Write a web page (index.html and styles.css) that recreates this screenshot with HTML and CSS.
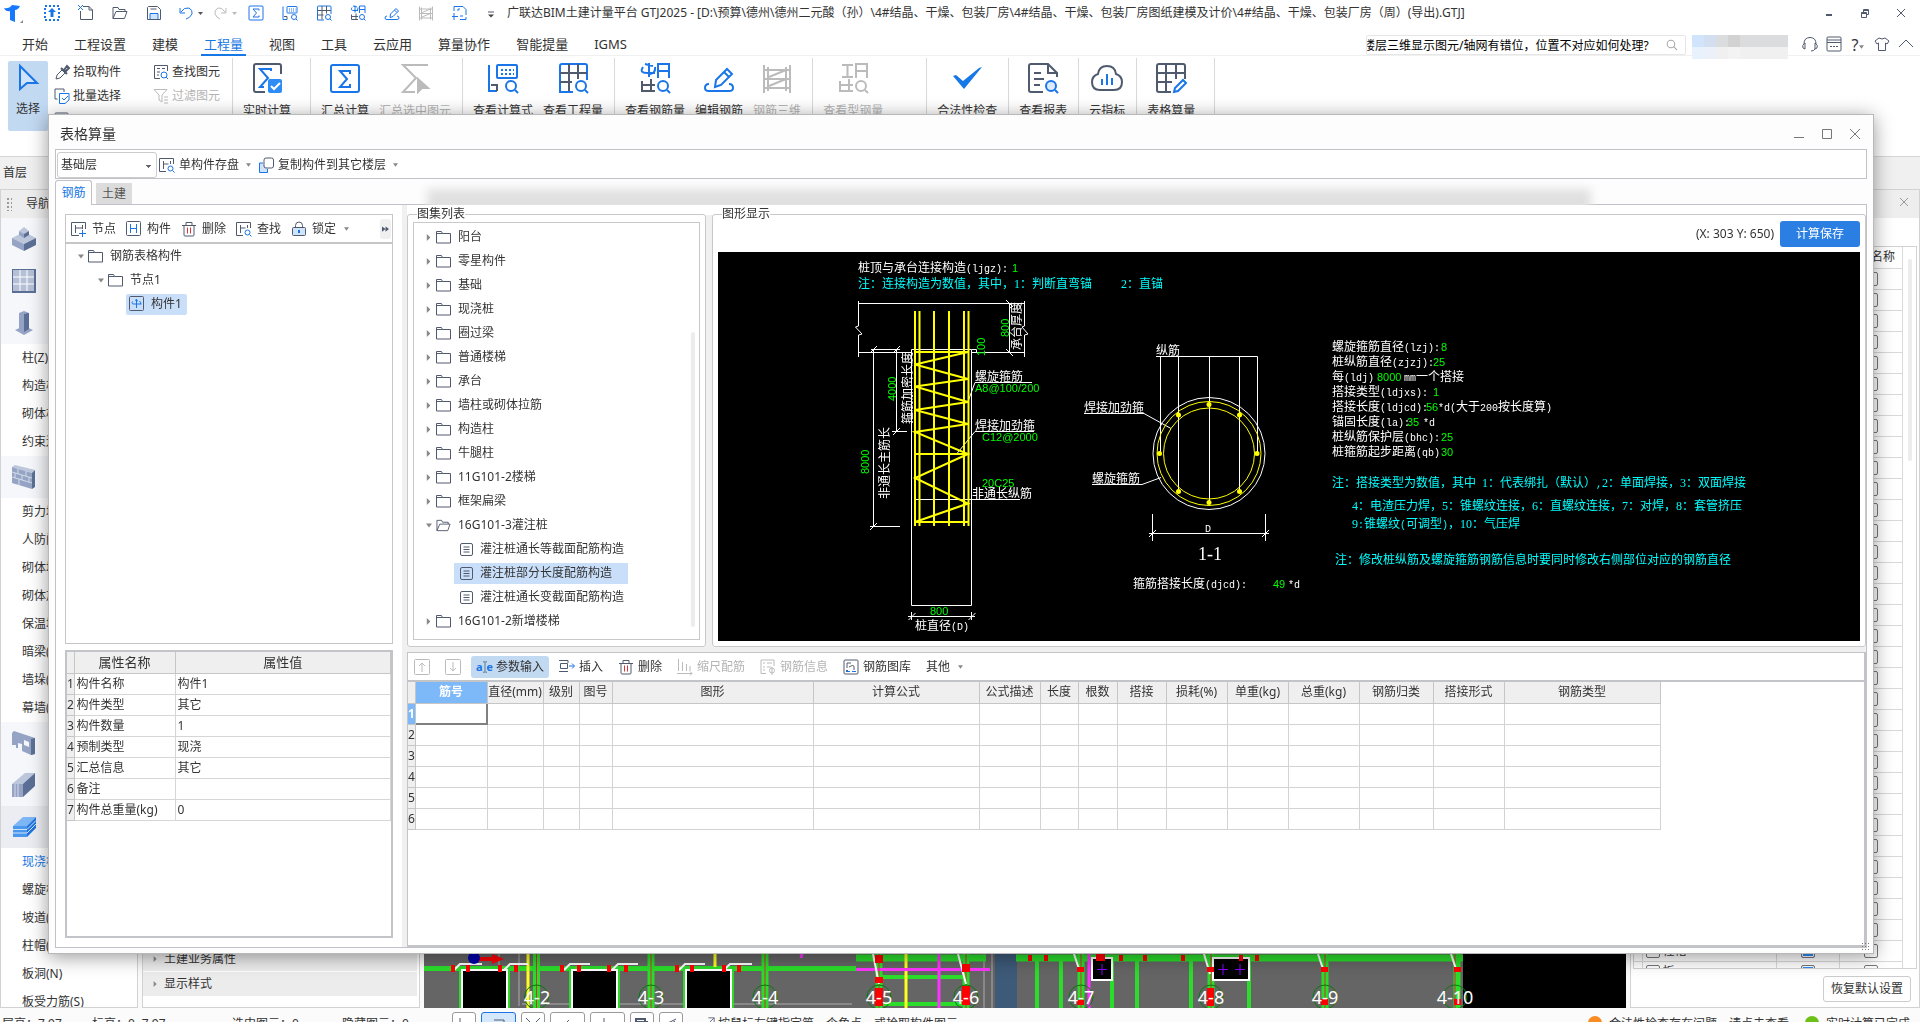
FILE: index.html
```html
<!DOCTYPE html>
<html lang="zh-CN">
<head>
    <meta charset="UTF-8">
    <meta name="viewport" content="width=device-width, initial-scale=1.0">
    <title>广联达BIM土建计量平台 GTJ2025</title>
    <link rel="stylesheet" href="styles.css">
</head>
<body>
    <!-- Icon set -->
    <svg class="defs" aria-hidden="true">
        <symbol id="i-folder" viewBox="0 0 15 13"><path d="M.5 12V.5h5l1 2h8V12zM.5 2.500h6" /></symbol>
        <symbol id="i-folder-open" viewBox="0 0 16 13"><path d="M1 12V1h5l1 2h6v2M1 12 4 5h11l-2.500 7z" /></symbol>
        <symbol id="i-doc" viewBox="0 0 13 13"><rect x=".5" y=".5" width="12" height="12" rx="1.500" /><path d="M3.500 4h6M3.500 6.500h6M3.500 9h6" /></symbol>
        <symbol id="i-right" viewBox="0 0 5 8"><path d="M0 0v8l4-4z" class="solid" /></symbol>
        <symbol id="i-down" viewBox="0 0 6 4"><path d="M0 0h6L3 4z" class="solid" /></symbol>
        <symbol id="i-sum" viewBox="0 0 16 16"><rect x="1" y="1" width="14" height="14" rx="1" /><path d="M11 5.500V4H5l3.500 4L5 12h6v-1.500" /></symbol>
        <symbol id="i-node" viewBox="0 0 16 16"><path d="M8 14.500H.5v-13h14V8M4.500 4v8M11.500 4v4M4.500 7h7" /><path class="blue" d="M11.500 9v7M8 12.500h7" /></symbol>
        <symbol id="i-part" viewBox="0 0 16 16"><rect x=".5" y=".5" width="14" height="14" rx="1" /><path class="blue" d="M4.500 3v9M10.500 3v9M4.500 7.500h6" /></symbol>
        <symbol id="i-trash" viewBox="0 0 16 16"><path d="M1 4.500h14M5 4V1.500h6V4M3 4.500V14q0 1 1 1h8q1 0 1-1V4.500" /><path class="red" d="M6.500 6.500v6M9.500 6.500v6" /></symbol>
        <symbol id="i-find" viewBox="0 0 16 16"><path d="M7 14.500H.5v-13h14V7M4.500 4v8M11.500 4v3M4.500 7h5" /><circle class="blue" cx="11.500" cy="11.500" r="2.500" /><path class="blue" d="m13.500 13.500 2 2" /></symbol>
        <symbol id="i-lock" viewBox="0 0 16 16"><rect x="1.500" y="6.500" width="13" height="8" rx="1" fill="#cfe3fb" /><path d="M4.500 6V4.500q0-3.500 3.500-3.500t3.500 3.500V6" /><path class="blue" d="M8 9v3M7 10h2" stroke-width="2" /></symbol>
        <symbol id="i-copy" viewBox="0 0 16 16"><path class="blue" d="M5 6H1.500v9.500h8V12" fill="#cfe3fb" /><rect x="6" y="1" width="9.500" height="10" rx="2" fill="#fff" /></symbol>
        <symbol id="i-save" viewBox="0 0 16 16"><path d="M2.500 1.500h9l3 3v10h-13v-12z" /><path class="blue" d="M4 14V8.500h8V14" fill="#cfe3fb" /><path d="M4.500 4h6" /></symbol>
        <symbol id="i-view" viewBox="0 0 32 32"><path class="blue" d="M2 3v26h8" /><path d="M4 23h6v6" /><rect class="blue" x="10" y="3" width="20" height="13" rx="1" /><path class="blue" d="M14 8h13M14 12h13" stroke-dasharray="2 2" /><circle class="blue" cx="24" cy="24" r="5" /><path class="blue" d="m28 28 3 3" /></symbol>
        <symbol id="i-grid" viewBox="0 0 32 32"><path class="blue" d="M16 30H3V4q0-2 2-2h23q2 0 2 2v14" /><path d="M3 11h27M3 20h12M12 2v27M21 2v15" /><circle class="blue" cx="24" cy="24" r="5" /><path class="blue" d="m28 28 3 3" /></symbol>
        <symbol id="i-rebar" viewBox="0 0 32 32"><path class="blue" d="M10 1v14M4 5q-4 6 4 6h8M16 5q1 6-5 7M6 2l8 2" /><path d="M3 19v10h13M3 23h13M12 17v12" /><path class="blue" d="M19 16V2h11v14M19 9h11" /><circle class="blue" cx="24" cy="24" r="5" /><path class="blue" d="m28 28 3 3" /></symbol>
        <symbol id="i-edit" viewBox="0 0 32 32"><path class="blue" d="M6 22q-4 0-4 4 0 3 4 3h20q4 0 4-3 0-4-4-4M12 25l1-7L24 7l5 5-11 11zM21 10l5 5" /></symbol>
        <symbol id="i-frame" viewBox="0 0 32 32"><path d="M3 3v28M7 5v24M25 5v24M29 3v28M3 8h26M3 17h26M3 26h26M8 24l17-7M8 15l17-7" /></symbol>
        <symbol id="i-steel" viewBox="0 0 32 32"><path d="M5 3h11M10.500 3v12M5 15h11M3 19v10h13M3 23h13M12 17v12M19 16V2h11v14M19 9h11" /><circle cx="24" cy="24" r="5" /><path d="m28 28 3 3" /></symbol>
    </svg>

    <div class="app">
        <!-- Title bar -->
        <header class="titlebar">
            <svg class="logo" viewBox="0 0 20 20"><path d="M0 5q5 1 8-3l8 1q-2 4-5 4v12l-5-2V8q-4 1-6-3z" fill="#1677ff" /><path d="M16 20l3-3v3z" fill="#888" /></svg>
            <nav class="quick">
                <button aria-label="上传"><svg class="ico" viewBox="0 0 16 16"><rect class="blue" x="1" y="1" width="14" height="14" stroke-dasharray="2 2" stroke-width="2" /><path d="M8 3l4 4H9.500v5h-3V7H4z" fill="#1677e6" stroke="none" /></svg></button>
                <button aria-label="新建"><svg class="ico" viewBox="0 0 16 16"><path d="M5 1.500h6l3.500 3.500v9.500h-12V6" /><path d="M11 1.500V5h3.500" /><path class="blue" d="M0 0l5 5M5 0L0 5" /></svg></button>
                <button aria-label="打开"><svg class="ico" viewBox="0 0 16 13"><use href="#i-folder-open" /></svg></button>
                <button aria-label="保存"><svg class="ico"><use href="#i-save" /></svg></button>
                <button aria-label="撤销"><svg class="ico" viewBox="0 0 16 16"><path class="blue" d="M0 3v5h5M1 7q3-5 8-4 4 2 3 6-2 4-6 5" /><path d="M18 7h5l-2.500 3z" fill="#555" stroke="none" /></svg></button>
                <button aria-label="重做" disabled><svg class="ico" viewBox="0 0 16 16"><path d="M12 3v5H7M11 7Q8 2 4 3 0 5 1 9q2 4 5 5" /><path d="M18 7h5l-2.500 3z" fill="#bbb" stroke="none" /></svg></button>
                <button aria-label="汇总"><svg class="ico all-blue"><use href="#i-sum" /></svg></button>
                <button aria-label="查看计算式"><svg class="ico bold"><use href="#i-view" /></svg></button>
                <button aria-label="查看工程量"><svg class="ico bold"><use href="#i-grid" /></svg></button>
                <button aria-label="查看钢筋量"><svg class="ico bold"><use href="#i-rebar" /></svg></button>
                <button aria-label="编辑钢筋"><svg class="ico bold"><use href="#i-edit" /></svg></button>
                <button aria-label="钢筋三维" disabled><svg class="ico bold"><use href="#i-frame" /></svg></button>
                <button aria-label="导出"><svg class="ico all-blue" viewBox="0 0 16 16"><path d="M2 6V1.500h9l3 3V10M2 8v7M0 11.500h6M14 12v2.500H8M6 4v2M6 4h2M11 11h-3" /></svg></button>
                <button class="more" aria-label="更多"><svg class="ico" viewBox="0 0 16 16"><path d="M5 7h6" /><path d="M5 9.500h6l-3 3z" fill="#444" stroke="none" /></svg></button>
            </nav>
            <h1>广联达BIM土建计量平台 GTJ2025 - [D:\预算\德州\德州二元酸（孙）\4#结晶、干燥、包装厂房\4#结晶、干燥、包装厂房图纸建模及计价\4#结晶、干燥、包装厂房（周）(导出).GTJ]</h1>
            <div class="winctl">
                <button aria-label="最小化"><svg viewBox="0 0 12 12"><path d="M3 8h6" stroke-width="2" /></svg></button>
                <button aria-label="还原"><svg viewBox="0 0 12 12"><path d="M2.500 5.500h5v5h-5zM4.500 5V2.500h5v5H8M2.500 6.500h5M4.500 3.500h5" /></svg></button>
                <button aria-label="关闭"><svg viewBox="0 0 12 12"><path d="M2 2l8 8M10 2l-8 8" /></svg></button>
            </div>
        </header>

        <!-- Menu -->
        <div class="menubar">
            <nav>
                <a href="#">开始</a><a href="#">工程设置</a><a href="#">建模</a><a href="#" class="active">工程量</a><a href="#">视图</a><a href="#">工具</a><a href="#">云应用</a><a href="#">算量协作</a><a href="#">智能提量</a><a href="#">IGMS</a>
            </nav>
            <div class="search">
                <input type="text" aria-label="搜索" value="楼层三维显示图元/轴网有错位，位置不对应如何处理?">
                <svg viewBox="0 0 12 12"><circle cx="5.500" cy="5.500" r="3.500" /><path d="m8 8 3 3" /></svg>
            </div>
            <div class="account"><i></i><i></i><i></i><i></i><i></i><i></i><i></i><i></i></div>
            <div class="help">
                <button aria-label="客服"><svg viewBox="0 0 16 16"><path d="M2 8q0-6.500 6-6.500T14 8M2 8q-2 1-1 4l2 1V7zM14 8q2 1 1 4l-2 1V7zM13 13q-1 2-4 2" /></svg></button>
                <button aria-label="日历"><svg viewBox="0 0 16 16"><rect x="1" y="1" width="14" height="14" rx="1" /><path d="M1 4h14M1 6.500h14M4 10.500h2M7 10.500h2M10 10.500h2" /></svg></button>
                <button aria-label="帮助">?<svg class="caret"><use href="#i-down" /></svg></button>
                <button aria-label="皮肤"><svg viewBox="0 0 16 16"><path d="M5 2 1 5l2 3 1.500-1v7.500h7V7L13 8l2-3-4-3q-3 2-6 0z" /></svg></button>
                <button aria-label="收起"><svg viewBox="0 0 16 16"><path d="M1 11l7-7 7 7" /></svg></button>
            </div>
        </div>

        <!-- Ribbon -->
        <div class="ribbon">
            <button class="select-tool"><svg viewBox="0 0 24 28"><path d="M4 2v23l7-6h10z" fill="#cfe3fb" /></svg>选择</button>
            <div class="small-tools">
                <button><svg class="ico" viewBox="0 0 16 16"><path d="M2 15l1-4 5-5 3 3-5 5z" /><path d="M7 4l6 6M10 6l3-4 2 2-3 3z" stroke-width="2" /></svg>拾取构件</button>
                <button><svg class="ico" viewBox="0 0 16 16"><path d="M3.500 11H1V1h9v3" /><path class="blue" d="M5.500 5.500h9.500V12l-4 3.500h-5.500zM8 10l2 2 4-4" fill="#fff" /></svg>批量选择</button>
                <button aria-label="属性"><svg class="ico" viewBox="0 0 16 16"><rect x="1" y="1" width="13" height="12" rx="1" /></svg></button>
            </div>
            <div class="small-tools second">
                <button><svg class="ico" viewBox="0 0 16 16"><path d="M7 14.500H1.500v-13h13V7M4 4.500h3M4 8h3M4 11h2M9 4.500h3" /><circle class="blue" cx="11" cy="11" r="3" /><path class="blue" d="m13 13 2 2" /></svg>查找图元</button>
                <button disabled><svg class="ico" viewBox="0 0 16 16"><path d="M1 1.500h13L9 7v7l-3-2V7zM11 9h4M11 12h4M11 15h4" /></svg>过滤图元</button>
            </div>
            <div class="group wide">
                <button><svg viewBox="0 0 32 32"><path d="M14 30H5q-2 0-2-2V4q0-2 2-2h23q2 0 2 2v8" /><path class="blue" d="M20 9V7H9l8 9-8 9h4" /><rect x="17" y="17" width="14" height="14" rx="2" fill="#2f8cf5" stroke="none" /><path d="m20 24 3 3 6-6" stroke="#fff" /></svg>实时计算</button>
            </div>
            <div class="group">
                <button><svg viewBox="0 0 32 32"><rect class="blue" x="2" y="3" width="28" height="27" rx="2" /><path class="blue" d="M21 12V9H11l7 8-7 8h10v-3" /></svg>汇总计算</button>
                <button disabled><svg viewBox="0 0 32 32"><path d="M29 3H4l13 13L4 30h12" /><path d="M19 17v13l4-4h6z" fill="#bbb" /></svg>汇总选中图元</button>
            </div>
            <div class="group">
                <button><svg><use href="#i-view" /></svg>查看计算式</button>
                <button><svg><use href="#i-grid" /></svg>查看工程量</button>
            </div>
            <div class="group">
                <button><svg><use href="#i-rebar" /></svg>查看钢筋量</button>
                <button><svg><use href="#i-edit" /></svg>编辑钢筋</button>
                <button disabled><svg><use href="#i-frame" /></svg>钢筋三维</button>
            </div>
            <div class="group steel">
                <button disabled><svg><use href="#i-steel" /></svg>查看型钢量</button>
            </div>
            <div class="group">
                <button><svg viewBox="0 0 32 32"><path d="M2 14l3-1 7 6L28 6l3-1-18 22z" fill="#1677e6" stroke="none" /></svg>合法性检查</button>
            </div>
            <div class="group">
                <button><svg viewBox="0 0 32 32"><path d="M16 30H4q-2 0-2-2V4q0-2 2-2h17l9 9v4M21 2v9h9M7 11h7M7 17h10M7 23h6" /><circle class="blue" cx="24" cy="24" r="5" fill="#dcebfd" /><path class="blue" d="m28 28 3 3" /></svg>查看报表</button>
            </div>
            <div class="group">
                <button><svg viewBox="0 0 32 32"><path d="M9 28q-8 0-8-8 0-6 6-8 1-8 9-8t9 8q6 2 6 8 0 8-8 8z" /><path class="blue" d="M11 23v-6M16 23V12M21 23v-7" /></svg>云指标</button>
            </div>
            <div class="group wide">
                <button><svg viewBox="0 0 32 32"><path d="M16 30H4q-2 0-2-2V4q0-2 2-2h24q2 0 2 2v13M2 11h28M2 20h15M11 2v27M21 2v15" /><path class="blue" d="M19 30l1-4 8-8 3 3-8 8z" /></svg>表格算量</button>
            </div>
        </div>

        <div class="floorbar">首层</div>

        <!-- Work area behind the dialog -->
        <div class="workspace">
            <aside class="nav-panel">
                <h2><span class="grip"></span>导航树</h2>
                <div class="cat"><svg viewBox="0 0 24 24"><path d="M0 11 12 5l12 6-12 6z" fill="#bcc7dc" /><path d="M0 11l12 6v7L0 18z" fill="#95a4c4" /><path d="M24 11l-12 6v7l12-6z" fill="#5b6f96" /><path d="M7 4l5-4 5 4-5 3z" fill="#bcc7dc" /><path d="M7 4l5 3v4L7 8z" fill="#95a4c4" /><path d="M17 4v4l-5 3V7z" fill="#5b6f96" /></svg></div>
                <div class="cat"><svg viewBox="0 0 24 24"><path d="M0 0h24v24H0z" fill="#5b6f96" /><path d="M1 1h21v21H1z" fill="#b5c0d6" /><path d="M8 1v21M15 1v21M1 8h21M1 15h21" stroke="#fff" /></svg></div>
                <div class="cat"><svg viewBox="0 0 24 24"><path d="M3 19l9-4 9 4-9 5z" fill="#95a4c4" /><path d="M7 2l5-2 5 2v16l-5 3-5-3z" fill="#95a4c4" /><path d="M12 3l5-1v16l-5 3z" fill="#5b6f96" /></svg></div>
                <ul><li>柱(Z)</li><li>构造柱(Z)</li><li>砌体柱(Z)</li><li>约束边缘</li></ul>
                <div class="cat"><svg viewBox="0 0 24 24"><path d="M0 2l3-2 20 5-3 3z" fill="#bcc7dc" /><path d="M0 2l20 6v16L0 18z" fill="#95a4c4" /><path d="M20 8l3-3v17l-3 2z" fill="#5b6f96" /><path d="M0 7l20 6M0 12l20 6M6 4v5M14 6v5M3 8v5M10 10v5M17 12v5M7 14v6" stroke="#d5dcea" /></svg></div>
                <ul><li>剪力墙(Q)</li><li>人防门框</li><li>砌体墙(Q)</li><li>砌体加筋</li><li>保温墙(Q)</li><li>暗梁(A)</li><li>墙垛(E)</li><li>幕墙(Q)</li></ul>
                <div class="cat"><svg viewBox="0 0 24 24"><path d="M0 2l2-2 21 7v16l-4 1-9-4v-7l-4-1v5H4v-3H0z" fill="#95a4c4" /><path d="M19 8l4-1v16l-4 1z" fill="#5b6f96" /><path d="M12 9l5 2v5l-5-2z" fill="#f5f7fa" /></svg></div>
                <div class="cat"><svg viewBox="0 0 24 24"><path d="M0 11 13 0h10L11 12z" fill="#bcc7dc" /><path d="M0 11h11v13H0z" fill="#95a4c4" /><path d="M11 11 23 0v13L11 24z" fill="#5b6f96" /><path d="M3 11v13M6 11v13" stroke="#d5dcea" /></svg></div>
                <div class="cat on"><svg viewBox="0 0 24 24"><path d="M1 11 11 2h13L15 11z" fill="#7db6f5" /><path d="M1 11h14v11H1z" fill="#4a97ee" /><path d="M15 11l9-9v11l-9 9z" fill="#1f74dd" /><path d="M1 14.500h14l9-9M1 18h14l9-9" stroke="#cfe3fb" fill="none" /></svg></div>
                <ul><li class="on">现浇板(B)</li><li>螺旋板(B)</li><li>坡道(PD)</li><li>柱帽(V)</li><li>板洞(N)</li><li>板受力筋(S)</li></ul>
            </aside>
            <section class="attr-panel">
                <p><svg class="tri"><use href="#i-right" /></svg>土建业务属性</p>
                <p><svg class="tri"><use href="#i-right" /></svg>显示样式</p>
            </section>
            <section class="model-view">
                <svg class="model" viewBox="0 0 1202 54" preserveAspectRatio="xMinYMax slice">
                    <path d="M0 0h1039v54H0z" fill="#656565" />
                    <path d="M571 0h22v54h-22z" fill="#3d5a78" />
                    <path d="M75 0v50M95 0v52M98 50h330M560 0v54M568 0v54" stroke="#888" stroke-width="2" />
                    <g stroke="#2bdc2b">
                        <path d="M0 14.500h432" stroke-width="5" />
                        <path d="M432 4h130M592 4h447" stroke-width="7" />
                        <path d="M455 23h85M455 50h85M613 6v48M637 6v48M688 6v48M713 6v48M767 6v48M825 6v48" stroke-width="4" />
                        <path d="M112.500 0v54M227 0v54M341 0v54M455 0v54M542 0v54M657 0v54M787 0v54M901 0v54M1033 0v54" stroke-width="7" />
                    </g>
                    <path d="M104 0v54M291 0v14M482 0v54" stroke="#ffff22" stroke-width="3" />
                    <path d="M432 15.500h134M515 0v54M665 0v54M378 0l-1 4" stroke="#ff33ff" stroke-width="3" />
                    <path d="M112.500 0v54M227 0v54M341 0v54M455 0v54M542 0v54M657 0v54M787 0v54M901 0v54M1031 0v54" stroke="#c33" />
                    <path d="M36 56V14h49v42M146 56V14h49v42M260 56V14h49v42" stroke="#2bdc2b" stroke-width="2" />
                    <g stroke="#fff" stroke-width="2" fill="#000">
                        <path d="M38 56V16h45v40M148 56V16h45v40M262 56V16h45v40M668 4h20v22h-20zM789 4h36v22h-36z" />
                        <path d="M30 16l6-6h22M80 16l6-6h18M140 16l6-6h20M188 16l6-6h20M255 16l6-6h20M300 16l6-6h22M449 0l6 30M534 0l8 30M650 0l6 18M780 0l6 20M894 0l6 18M1027 0l6 18" fill="none" />
                    </g>
                    <path d="M678 10v11M673 15.500h10M799 10v11M794 15.500h10M816 10v11M811 15.500h10" stroke="#80f" />
                    <g fill="#f00">
                        <path d="M27 11h4v7h-4zM42 11h4v7h-4zM74 11h4v7h-4zM90 11h4v7h-4zM136 11h4v7h-4zM153 11h4v7h-4zM183 11h4v7h-4zM200 11h4v7h-4zM251 11h4v7h-4zM266 11h4v7h-4zM298 11h4v7h-4zM313 11h4v7h-4zM604 1h4v6h-4zM620 1h4v6h-4zM672 0h9v7h-9zM695 1h4v6h-4zM719 1h4v6h-4zM757 1h4v6h-4zM815 1h4v6h-4zM831 1h4v6h-4z" />
                        <path d="M451 1h8v8h-8zM451 23h8v6h-8zM451 34h8v18h-8zM538 10h8v8h-8zM538 32h8v19h-8zM653 13h7v5h-7zM653 46h7v5h-7zM783 13h7v5h-7zM783 34h7v18h-7zM897 13h7v5h-7zM897 45h7v6h-7zM1030 13h7v5h-7zM1030 45h7v6h-7z" />
                        <path d="M54 3h14V0l12 5-12 5V7H54z" />
                    </g>
                    <circle cx="50" cy="4" r="6" fill="#00a" />
                    <g fill="none" stroke="#087a08" stroke-width="1">
                        <circle cx="112.500" cy="43" r="12" /><circle cx="227" cy="43" r="12" /><circle cx="341" cy="43" r="12" /><circle cx="455" cy="43" r="12" /><circle cx="542" cy="43" r="12" /><circle cx="657" cy="43" r="12" /><circle cx="787" cy="43" r="12" /><circle cx="901" cy="43" r="12" /><circle cx="1031" cy="43" r="12" />
                    </g>
                    <g class="axis">
                        <text x="113" y="50">4-2</text><text x="227" y="50">4-3</text><text x="341" y="50">4-4</text><text x="455" y="50">4-5</text><text x="542" y="50">4-6</text><text x="657" y="50">4-7</text><text x="787" y="50">4-8</text><text x="901" y="50">4-9</text><text x="1031" y="50">4-10</text>
                    </g>
                </svg>
            </section>
            <aside class="display-panel">
                <h2><button aria-label="关闭面板"><svg viewBox="0 0 12 12"><path d="M2 2l8 8M10 2l-8 8" /></svg></button></h2>
                <div class="display-list">
                    <table>
                        <thead><tr><th class="idx"></th><th></th><th class="c">显示图元</th><th class="c">显示名称</th></tr></thead>
                        <tbody id="layers"></tbody>
                    </table>
                    <span class="scroll"></span>
                </div>
                <button class="reset">恢复默认设置</button>
            </aside>
        </div>

        <!-- Status bar -->
        <footer class="status">
            <span class="s1">层高：7.97</span><span class="s2">标高：0~7.97</span><span class="s3">选中图元：0</span><span class="s4">隐藏图元：0</span>
            <div class="snap">
                <button aria-label="正交"><svg viewBox="0 0 16 16"><path d="M4 1v12h10" /></svg></button>
                <button class="w on" aria-label="捕捉"><svg viewBox="0 0 16 16"><path d="M3 3h10v10H5V5" /></svg></button>
                <button aria-label="交点"><svg viewBox="0 0 16 16"><path d="M1 1l14 14M15 1 1 15" /></svg></button>
                <button class="w" aria-label="垂点"><svg viewBox="0 0 16 16"><path d="M9 3 3 9h10" /></svg></button>
                <button class="w" aria-label="中点"><svg viewBox="0 0 16 16"><path d="M4 1v12M0 6h8" /></svg></button>
                <button aria-label="图层"><svg viewBox="0 0 16 16"><path d="M2 2h9v10H2zM4 5h5v4H4zM13 4v8" stroke-width="2" /></svg></button>
                <button aria-label="测量"><svg viewBox="0 0 16 16"><path d="M2 9q1-4 5-4l6-3M3 10l9-6" /></svg></button>
            </div>
            <span class="hint"><svg viewBox="0 0 12 12"><path d="M1 11 11 1M4 1h7v7" /></svg>按鼠标左键指定第一个角点，或拾取构件图元</span>
            <span class="state"><i class="dot orange"></i>合法性检查存在问题，请点击查看</span>
            <span class="state"><i class="dot green"></i>实时计算已完成</span>
        </footer>
    </div>

    <!-- Dialog -->
    <div class="dialog" role="dialog" aria-labelledby="dlg-title">
        <div class="dlg-head">
            <h2 id="dlg-title">表格算量</h2>
            <div class="dlg-ctl">
                <button aria-label="最小化"><svg viewBox="0 0 12 12"><path d="M1 9.500h10" /></svg></button>
                <button aria-label="最大化"><svg viewBox="0 0 12 12"><path d="M1.500 1.500h9v9h-9z" /></svg></button>
                <button aria-label="关闭"><svg viewBox="0 0 12 12"><path d="M1 1l10 10M11 1 1 11" /></svg></button>
            </div>
        </div>
        <div class="dlg-tools">
            <select aria-label="楼层"><option>基础层</option></select>
            <button><svg class="ico"><use href="#i-find" /></svg>单构件存盘<svg class="caret"><use href="#i-down" /></svg></button>
            <button><svg class="ico"><use href="#i-copy" /></svg>复制构件到其它楼层<svg class="caret"><use href="#i-down" /></svg></button>
        </div>
        <div class="tabs">
            <button class="tab active">钢筋</button>
            <button class="tab">土建</button>
        </div>
        <div class="dlg-body">
            <div class="left">
                <div class="tree-tools">
                    <button><svg class="ico"><use href="#i-node" /></svg>节点</button>
                    <button><svg class="ico"><use href="#i-part" /></svg>构件</button>
                    <button><svg class="ico"><use href="#i-trash" /></svg>删除</button>
                    <button><svg class="ico"><use href="#i-find" /></svg>查找</button>
                    <button><svg class="ico"><use href="#i-lock" /></svg>锁定<svg class="caret"><use href="#i-down" /></svg></button>
                    <button class="expand" aria-label="更多"><svg viewBox="0 0 8 6"><path d="M0 0l4 3-4 3zM4 0l4 3-4 3z" /></svg></button>
                </div>
                <ul class="tree parts">
                    <li><svg class="tri"><use href="#i-down" /></svg><svg class="fold"><use href="#i-folder" /></svg>钢筋表格构件</li>
                    <li class="l2"><svg class="tri"><use href="#i-down" /></svg><svg class="fold"><use href="#i-folder" /></svg>节点1</li>
                    <li class="l3"><span class="sel"><svg class="ico" viewBox="0 0 16 16"><rect x=".5" y=".5" width="14" height="14" rx="1" /><path class="blue" d="M7.500 3v9M3.500 5.500Q2 8 5 8h7.500M10.500 5q2 2 1 3M6 4l3 1" /></svg>构件1</span></li>
                </ul>
                <div class="props">
                    <table>
                        <colgroup><col class="n"><col class="k"><col></colgroup>
                        <thead><tr><th></th><th>属性名称</th><th>属性值</th></tr></thead>
                        <tbody>
                            <tr><th>1</th><td>构件名称</td><td>构件1</td></tr>
                            <tr><th>2</th><td>构件类型</td><td>其它</td></tr>
                            <tr><th>3</th><td>构件数量</td><td>1</td></tr>
                            <tr><th>4</th><td>预制类型</td><td>现浇</td></tr>
                            <tr><th>5</th><td>汇总信息</td><td>其它</td></tr>
                            <tr><th>6</th><td>备注</td><td></td></tr>
                            <tr><th>7</th><td>构件总重量(kg)</td><td>0</td></tr>
                        </tbody>
                    </table>
                </div>
            </div>
            <div class="right">
                <div class="upper">
                    <fieldset class="atlas">
                        <legend>图集列表</legend>
                        <ul class="tree atlas-list">
                            <li><svg class="tri"><use href="#i-right" /></svg><svg class="fold"><use href="#i-folder" /></svg>阳台</li>
                            <li><svg class="tri"><use href="#i-right" /></svg><svg class="fold"><use href="#i-folder" /></svg>零星构件</li>
                            <li><svg class="tri"><use href="#i-right" /></svg><svg class="fold"><use href="#i-folder" /></svg>基础</li>
                            <li><svg class="tri"><use href="#i-right" /></svg><svg class="fold"><use href="#i-folder" /></svg>现浇桩</li>
                            <li><svg class="tri"><use href="#i-right" /></svg><svg class="fold"><use href="#i-folder" /></svg>圈过梁</li>
                            <li><svg class="tri"><use href="#i-right" /></svg><svg class="fold"><use href="#i-folder" /></svg>普通楼梯</li>
                            <li><svg class="tri"><use href="#i-right" /></svg><svg class="fold"><use href="#i-folder" /></svg>承台</li>
                            <li><svg class="tri"><use href="#i-right" /></svg><svg class="fold"><use href="#i-folder" /></svg>墙柱或砌体拉筋</li>
                            <li><svg class="tri"><use href="#i-right" /></svg><svg class="fold"><use href="#i-folder" /></svg>构造柱</li>
                            <li><svg class="tri"><use href="#i-right" /></svg><svg class="fold"><use href="#i-folder" /></svg>牛腿柱</li>
                            <li><svg class="tri"><use href="#i-right" /></svg><svg class="fold"><use href="#i-folder" /></svg>11G101-2楼梯</li>
                            <li><svg class="tri"><use href="#i-right" /></svg><svg class="fold"><use href="#i-folder" /></svg>框架扁梁</li>
                            <li><svg class="tri"><use href="#i-down" /></svg><svg class="fold"><use href="#i-folder-open" /></svg>16G101-3灌注桩</li>
                            <li class="leaf"><span><svg class="doc"><use href="#i-doc" /></svg>灌注桩通长等截面配筋构造</span></li>
                            <li class="leaf"><span class="sel"><svg class="doc"><use href="#i-doc" /></svg>灌注桩部分长度配筋构造</span></li>
                            <li class="leaf"><span><svg class="doc"><use href="#i-doc" /></svg>灌注桩通长变截面配筋构造</span></li>
                            <li><svg class="tri"><use href="#i-right" /></svg><svg class="fold"><use href="#i-folder" /></svg>16G101-2新增楼梯</li>
                        </ul>
                        <span class="scroll"></span>
                    </fieldset>
                    <fieldset class="figure">
                        <legend>图形显示</legend>
                        <div class="figure-head"><span>(X: 303 Y: 650)</span><button class="primary">计算保存</button></div>
                        <svg class="cad" viewBox="0 0 1142 389" preserveAspectRatio="xMidYMid meet">
                            <!-- pile cap and pile outline -->
                            <g class="w">
                                <path d="M140.500 51.500h166M140.500 49v25l-3 1 6.500 7-3.500 1v22M306.500 49v25l-2.500 1 6 7-3.500 1v22M140.500 100.500h53M254 100.500h52.500M193.500 97.500h60v256h-60zM254 97.500h4.500V101" />
                                <path d="M291.500 51v50M288 48l7 7M288 97l7 7M155.500 97.500v177M153 97.500h29M152 274.500h30M152 101l7-7M152 278l7-7M178.500 97.500v82M174 179.500h15M175 101l7-7M175 183l7-7" />
                                <path d="M257 130.500h57M257 130.500l-7 19M257 179.500h59M257 179.500l-18 22M197 247.500h105M190 364.500h67M190.500 368l7-7M250.500 368l7-7M193.500 360v8M253.500 360v8" />
                            </g>
                            <g class="y bar">
                                <path d="M197 59v215M201.500 59v215M216 59v215M231 59v215M246 59v215M250.500 59v215M197 100h53M197 202h53M197 270h53" />
                                <path d="M250 100l-53 12.500 53 14.500-53 7.500 53 15.500-53 8 53 14-53 8 53 22-53 24 53 25.500-53 18.500" />
                            </g>
                            <!-- section 1-1 -->
                            <g class="w">
                                <path d="M438 104.500h101.500V201M442.500 104.500V201M460.500 104.500V239M491.500 104.500V251M521.500 104.500V239" />
                                <circle cx="491" cy="201.500" r="56" />
                                <path d="M366 161.500h60l27 15M374 232.500h50l19-7M431 281.500h120M434.500 262v27M547.500 262v27M431 285l7-7M544 285l7-7" />
                            </g>
                            <g class="y">
                                <circle cx="491" cy="201.500" r="52" /><circle cx="491" cy="201.500" r="45.500" />
                            </g>
                            <g fill="#ff0">
                                <circle cx="491" cy="152.500" r="2.500" /><circle cx="460.500" cy="163" r="2.500" /><circle cx="521.500" cy="163" r="2.500" /><circle cx="441.500" cy="201.500" r="2.500" /><circle cx="539" cy="201.500" r="2.500" /><circle cx="460.500" cy="239.500" r="2.500" /><circle cx="521.500" cy="239.500" r="2.500" /><circle cx="491" cy="250.500" r="2.500" />
                            </g>
                            <g class="tw">
                                <text x="140" y="20">桩顶与承台连接构造<tspan class="en">(ljgz):</tspan></text>
                                <text x="257" y="129">螺旋箍筋</text><text x="257" y="178">焊接加劲箍</text><text x="254" y="246">非通长纵筋</text>
                                <text x="197" y="378">桩直径<tspan class="en">(D)</tspan></text>
                                <text transform="translate(303 98) rotate(-90)">承台厚度</text>
                                <text transform="translate(194 172) rotate(-90)">箍筋加密长度</text>
                                <text transform="translate(171 247) rotate(-90)">非通长主筋长</text>
                                <text x="438" y="103">纵筋</text><text x="366" y="160">焊接加劲箍</text><text x="374" y="231">螺旋箍筋</text>
                                <text x="487" y="280" class="en">D</text><text x="480" y="308" class="big">1-1</text>
                                <text x="415" y="336">箍筋搭接长度<tspan class="en">(djcd):</tspan></text><text x="570" y="336" class="en">*d</text>
                                <text x="614" y="99">螺旋箍筋直径<tspan class="en">(lzj):</tspan></text>
                                <text x="614" y="114">桩纵筋直径<tspan class="en">(zjzj):</tspan></text>
                                <text x="614" y="129">每<tspan class="en">(ldj)</tspan></text><text x="686" y="129"><tspan class="en">mm</tspan>一个搭接</text>
                                <text x="614" y="144">搭接类型<tspan class="en">(ldjxs):</tspan></text>
                                <text x="614" y="159">搭接长度<tspan class="en">(ldjcd):</tspan></text><text x="720" y="159"><tspan class="en">*d(</tspan>大于<tspan class="en">200</tspan>按长度算<tspan class="en">)</tspan></text>
                                <text x="614" y="174">锚固长度<tspan class="en">(la):</tspan></text><text x="705" y="174" class="en">*d</text>
                                <text x="614" y="189">桩纵筋保护层<tspan class="en">(bhc):</tspan></text>
                                <text x="614" y="204">桩箍筋起步距离<tspan class="en">(qb)</tspan></text>
                            </g>
                            <g class="tg">
                                <text x="294" y="20">1</text>
                                <text x="257" y="140">A8@100/200</text><text x="264" y="189">C12@2000</text><text x="264" y="235">20C25</text><text x="212" y="363">800</text>
                                <text transform="translate(291 85) rotate(-90)">800</text>
                                <text transform="translate(267 104) rotate(-90)">100</text>
                                <text transform="translate(178 149) rotate(-90)">4000</text>
                                <text transform="translate(151 222) rotate(-90)">8000</text>
                                <text x="555" y="336">49</text>
                                <text x="723" y="99">8</text><text x="715" y="114">25</text><text x="659" y="129">8000</text><text x="715" y="144">1</text><text x="708" y="159">56</text><text x="689" y="174">35</text><text x="723" y="189">25</text><text x="723" y="204">30</text>
                            </g>
                            <g class="tc">
                                <text x="140" y="36">注：连接构造为数值，其中，1：判断直弯锚</text><text x="403" y="36">2：直锚</text>
                                <text x="614" y="235">注：搭接类型为数值，其中<tspan class="en"> </tspan>1：代表绑扎（默认）<tspan class="en">,</tspan>2：单面焊接，3：双面焊接</text>
                                <text x="634" y="258">4：电渣压力焊，5：锥螺纹连接，6：直螺纹连接，7：对焊，8：套管挤压</text>
                                <text x="634" y="276">9<tspan class="en">:</tspan>锥螺纹<tspan class="en">(</tspan>可调型<tspan class="en">)</tspan>，10：气压焊</text>
                                <text x="617" y="312">注：修改桩纵筋及螺旋箍筋钢筋信息时要同时修改右侧部位对应的钢筋直径</text>
                            </g>
                        </svg>
                    </fieldset>
                </div>
                <div class="lower">
                    <div class="bar-tools">
                        <button class="sq" disabled aria-label="上移"><svg class="ico" viewBox="0 0 16 16"><rect x=".5" y=".5" width="15" height="15" rx="1" /><path d="M8 13V4M5 7l3-3 3 3" /></svg></button>
                        <button class="sq" disabled aria-label="下移"><svg class="ico" viewBox="0 0 16 16"><rect x=".5" y=".5" width="15" height="15" rx="1" /><path d="M8 3v9M5 9l3 3 3-3" /></svg></button>
                        <button class="on"><span class="ae">a<svg viewBox="0 0 5 14"><path d="M0 .5h2l.5.5.5-.5h2M2.500 1v12M0 13.500h2l.5-.5.5.5h2" /></svg>e</span>参数输入</button>
                        <button><svg class="ico" viewBox="0 0 16 16"><path d="M0 1.500h9M0 12.500h9M1.500 4.500h7v5h-7zM9 1.500V4" /><path class="blue" d="M10 7h5M13 4.500 15.500 7 13 9.500" /></svg>插入</button>
                        <button><svg class="ico"><use href="#i-trash" /></svg>删除</button>
                        <button disabled><svg class="ico" viewBox="0 0 16 16"><path d="M1.500 0v12M5.500 3v9M9.500 5v7M13 7v5M0 14.500h15M13 12.500l2 2-2 2" /></svg>缩尺配筋</button>
                        <button disabled><svg class="ico" viewBox="0 0 16 16"><path d="M6 14.500H1V1h13v6M3 4h2M7 4h5M3 8h2M7 8h4M3 11h2" /><circle cx="12" cy="11.500" r="2.500" /><path d="M12 8v8" /></svg>钢筋信息</button>
                        <button><svg class="ico" viewBox="0 0 16 16"><rect x="1" y="1" width="14" height="14" rx="1" /><path d="M3 11.500h2M4 9V4h4M6 8q5-3 5 0v3" /><path class="blue" d="M3 12.500h4M9 12.500h4" /></svg>钢筋图库</button>
                        <button>其他<svg class="caret"><use href="#i-down" /></svg></button>
                    </div>
                    <table class="rebar">
                        <colgroup><col class="c7"><col class="c72"><col class="c56"><col class="c36"><col class="c33"><col class="c201"><col class="c166"><col class="c61"><col class="c38"><col class="c39"><col class="c49"><col class="c61"><col class="c61"><col class="c71"><col class="c74"><col class="c71"><col class="c156"></colgroup>
                        <thead><tr><th></th><th class="on">筋号</th><th>直径(mm)</th><th>级别</th><th>图号</th><th>图形</th><th>计算公式</th><th>公式描述</th><th>长度</th><th>根数</th><th>搭接</th><th>损耗(%)</th><th>单重(kg)</th><th>总重(kg)</th><th>钢筋归类</th><th>搭接形式</th><th>钢筋类型</th></tr></thead>
                        <tbody id="rebar-rows"></tbody>
                    </table>
                    <span class="resize"></span>
                </div>
            </div>
        </div>
    </div>

    <script>
        // empty rows of the rebar table
        const body = document.getElementById("rebar-rows");
        for (let i = 1; i <= 6; i++) {
            const tr = body.insertRow();
            tr.innerHTML = `<th class="${i === 1 ? "on" : ""}">${i}</th>` + "<td></td>".repeat(16);
            if (i === 1) tr.cells[1].className = "cursor";
        }

        // layer list on the right, only the last rows are filled in
        const layers = document.getElementById("layers");
        const names = { 32: "柱帽", 33: "板" };
        for (let i = 0; i < 34; i++) {
            const name = names[i] || "";
            const part = name ? `<label><input type="checkbox"> ${name}</label>` : "";
            const shown = name ? `<input type="checkbox" checked aria-label="显示${name}图元">` : "";
            layers.insertRow().innerHTML = `<td></td><td>${part}</td><td class="c">${shown}</td><td class="c"><input type="checkbox" aria-label="显示名称"></td>`;
        }
    </script>
</body>
</html>
```
FILE: styles.css
```css
/* Reset */
* {
    margin: 0;
    padding: 0;
    box-sizing: border-box;
}

body {
    font-family: "Noto Sans", "Noto Sans CJK SC", sans-serif;
    font-size: 12px;
    line-height: 16px;
    color: #333;
    background: #fff;
    overflow: hidden;
}

button, input, select {
    font: inherit;
    color: inherit;
}

button {
    border: none;
    background: none;
    white-space: nowrap;
    cursor: pointer;
}

button:disabled {
    color: #b4b4b4;
}

ul {
    list-style: none;
}

a {
    color: inherit;
    text-decoration: none;
}

table {
    border-collapse: collapse;
    table-layout: fixed;
}

h1, h2, th {
    font-size: 12px;
    font-weight: normal;
}

svg {
    fill: none;
    stroke: #505a6e;
    flex: none;
    overflow: visible;
}

.defs {
    position: absolute;
    width: 0;
    height: 0;
}

.blue, .all-blue {
    stroke: #1a75e8;
}

.red {
    stroke: #d33;
}

button:disabled svg, button:disabled .blue {
    stroke: #bbb;
}

.solid {
    fill: #888;
    stroke: none;
}

.ico {
    width: 16px;
    height: 16px;
}

.bold {
    stroke-width: 2;
}

.caret {
    width: 5px;
    height: 4px;
}

.app {
    height: 100vh;
    display: flex;
    flex-direction: column;
    overflow: hidden;
}

/* Title bar */
.titlebar {
    height: 26px;
    flex: none;
    display: flex;
    align-items: center;
    padding: 0 13px 0 4px;
}

.logo {
    width: 20px;
    height: 20px;
    stroke: none;
}

.quick {
    display: flex;
    gap: 18px;
    margin-left: 20px;
}

.quick button {
    width: 16px;
    height: 16px;
}

.quick .more {
    margin-left: -3px;
}

.titlebar h1 {
    flex: 1;
    margin-left: 8px;
    white-space: nowrap;
}

.winctl {
    display: flex;
    gap: 24px;
}

.winctl button, .winctl svg {
    width: 12px;
    height: 12px;
}

/* Menu */
.menubar {
    height: 30px;
    flex: none;
    display: flex;
    align-items: center;
    padding: 0 6px 0 9px;
    border-bottom: 1px solid #f0f0f0;
}

.menubar nav {
    display: flex;
    flex: 1;
    height: 30px;
    font-size: 13px;
    line-height: 36px;
}

.menubar nav a {
    padding: 0 13px;
}

.menubar nav .active {
    color: #1677e6;
    position: relative;
}

.menubar nav .active::after {
    content: "";
    position: absolute;
    left: 10px;
    right: 10px;
    bottom: 0;
    height: 2px;
    background: #1677e6;
}

.search {
    display: flex;
    align-items: center;
    width: 320px;
    height: 20px;
    margin-top: 8px;
    padding-right: 7px;
    border: 1px solid #e6e6e6;
    border-radius: 2px;
}

.search input {
    flex: 1;
    min-width: 0;
    height: 18px;
    border: none;
    outline: none;
    text-indent: -4px;
    color: #000;
    background: none;
}

.search svg {
    width: 13px;
    height: 13px;
    stroke: #aaa;
}

.account {
    display: grid;
    grid-template-columns: repeat(8, 12px);
    height: 24px;
    margin: 12px 14px 0 6px;
    z-index: 1;
}

.account i {
    background: linear-gradient(#dadcde 50%, #f0f0f0 50%);
}

.account i:nth-child(1) {
    background: linear-gradient(#d0e5fb 50%, #e8f2fd 50%);
}

.account i:nth-child(2) {
    background: linear-gradient(#d3dff0 50%, #ecf1f9 50%);
}

.account i:nth-child(4) {
    background: linear-gradient(#d2d2d2 50%, #f3f3f3 50%);
}

.help {
    display: flex;
    gap: 8px;
    margin-top: 8px;
}

.help button {
    width: 16px;
    font-size: 16px;
}

.help svg {
    width: 16px;
    height: 16px;
}

.help .caret {
    width: 5px;
    height: 8px;
    margin-left: 1px;
}

/* Ribbon */
.ribbon {
    height: 100px;
    flex: none;
    display: flex;
    padding-left: 8px;
}

.ribbon svg {
    stroke-width: 2;
}

.ribbon .ico {
    stroke-width: 1;
}

.select-tool {
    display: flex;
    flex-direction: column;
    align-items: center;
    gap: 9px;
    width: 40px;
    height: 70px;
    margin-top: 5px;
    padding-top: 3px;
    border-radius: 2px;
    background: #c2d9f2;
}

.select-tool svg {
    width: 24px;
    height: 28px;
    stroke: #1a75e8;
}

.small-tools {
    display: flex;
    flex-direction: column;
    width: 106px;
    padding: 4px 0 0 6px;
}

.small-tools.second {
    width: 79px;
    padding-left: 0;
    margin-left: -1px;
}

.small-tools button {
    display: flex;
    align-items: center;
    gap: 3px;
    height: 24px;
}

.group {
    display: flex;
    height: 70px;
    margin-top: 2px;
    padding: 0 6px 0 5px;
    border-left: 1px solid #d9d9d9;
}

.group.wide {
    padding-right: 14px;
}

.group.wide:last-child {
    border-right: 1px solid #d9d9d9;
}

.group.steel {
    padding-right: 38px;
}

.group button {
    display: flex;
    flex-direction: column;
    align-items: center;
    gap: 9px;
    padding: 4px 5px 0;
}

.group svg {
    width: 32px;
    height: 32px;
}

.floorbar {
    height: 33px;
    flex: none;
    padding: 8px 3px;
    background: #f0f0f0;
    border-top: 1px solid #d6d6d6;
}

/* Workspace */
.workspace {
    flex: 1;
    min-height: 0;
    display: flex;
    gap: 4px;
    background: #fafafa;
    border-top: 1px solid #d2d2d2;
}

.nav-panel {
    width: 138px;
    flex: none;
    overflow: hidden;
    background: #fff;
    border: 1px solid #d2d2d2;
    border-top: none;
}

.nav-panel h2, .display-panel h2 {
    display: flex;
    align-items: center;
    height: 28px;
    background: #eeeeef;
}

.grip {
    width: 6px;
    height: 14px;
    margin: 0 14px 0 5px;
    background: radial-gradient(#999 1px, transparent 1px) 0 0 / 4px 4px;
}

.cat {
    height: 42px;
    padding: 9px 11px;
    background: #f5f7fa;
}

.cat.on {
    background: #ebedf2;
}

.cat svg {
    width: 24px;
    height: 24px;
    stroke: none;
}

.nav-panel li {
    height: 28px;
    padding-left: 21px;
    line-height: 28px;
    white-space: nowrap;
}

.nav-panel .on {
    color: #1677e6;
}

.attr-panel {
    width: 278px;
    flex: none;
    display: flex;
    flex-direction: column;
    justify-content: flex-end;
    padding: 0 2px 11px 0;
    background: #fff;
    border: 1px solid #d2d2d2;
}

.attr-panel p {
    display: flex;
    align-items: center;
    gap: 6px;
    height: 24px;
    margin-top: 1px;
    padding-left: 10px;
    background: #ececec;
}

.attr-panel .tri {
    width: 5px;
    height: 6px;
}

.model-view {
    flex: 1;
    min-width: 0;
    display: flex;
    align-items: flex-end;
    background: #000;
}

.model {
    width: 100%;
    height: 54px;
    overflow: hidden;
    stroke: none;
}

.axis {
    font-size: 18px;
    fill: #fff;
    text-anchor: middle;
}

.display-panel {
    width: 290px;
    flex: none;
    display: flex;
    flex-direction: column;
    align-items: flex-end;
    background: #fff;
    border: 1px solid #d2d2d2;
    border-top: none;
}

.display-panel h2 {
    width: 100%;
    justify-content: flex-end;
    padding-right: 9px;
}

.display-panel h2 svg {
    width: 12px;
    height: 12px;
    stroke: #999;
}

.display-list {
    position: relative;
    flex: 1;
    min-height: 0;
    width: 284px;
    margin: 28px 2px 7px 0;
    overflow: hidden;
    border: 1px solid #d2d2d2;
}

.display-list table {
    width: 269px;
}

.display-list th, .display-list td {
    height: 21px;
    border: 1px solid #d9d9d9;
    border-left: none;
    border-top: none;
}

.display-list .idx {
    width: 8px;
}

.display-list .c {
    width: 63px;
    text-align: center;
}

.display-list td:nth-child(2) {
    padding-left: 3px;
}

.display-list input {
    appearance: none;
    width: 14px;
    height: 14px;
    border: 1px solid #777;
    border-radius: 2px;
    background: #fff;
    vertical-align: middle;
}

.display-list input:checked {
    background: #2f8cf5;
    box-shadow: inset 0 0 0 1px #fff;
}

.scroll {
    position: absolute;
    width: 4px;
    border-radius: 2px;
    background: #ececec;
}

.display-list .scroll {
    right: 4px;
    top: 12px;
    height: 202px;
}

.reset {
    width: 88px;
    height: 26px;
    margin: 0 8px 5px 0;
    border: 1px solid #ccc;
    border-radius: 3px;
    background: #fff;
}

/* Status bar */
.status {
    height: 14px;
    flex: none;
    display: flex;
    align-items: flex-start;
    padding: 0 10px 0 2px;
    background: #fbfbfb;
    overflow: hidden;
    white-space: nowrap;
}

.status > span {
    padding-top: 8px;
}

.s1 { width: 90px; }
.s2 { width: 140px; }
.s3 { width: 110px; }
.s4 { width: 110px; }

.snap {
    display: flex;
    gap: 5px;
    padding-top: 4px;
}

.snap button {
    width: 24px;
    height: 24px;
    padding-top: 4px;
    border: 1px solid #999;
    border-radius: 3px;
    background: #fff;
}

.snap .w {
    width: 35px;
}

.snap .on {
    background: #d5e7fb;
    border-color: #1a75e8;
}

.snap svg {
    width: 16px;
    height: 16px;
}

.status .hint {
    flex: 1;
    padding-left: 22px;
}

.hint svg {
    width: 10px;
    height: 12px;
    margin-right: 3px;
}

.state {
    margin-left: 16px;
}

.dot {
    display: inline-block;
    width: 14px;
    height: 14px;
    margin-right: 7px;
    border-radius: 50%;
    vertical-align: top;
}

.orange { background: #fa8c24; }
.green { background: #6cc017; }

/* Dialog */
.dialog {
    position: fixed;
    left: 48px;
    right: 46px;
    top: 114px;
    bottom: 68px;
    display: flex;
    flex-direction: column;
    padding: 0 6px 5px;
    background: #fdfdfd;
    border: 1px solid #b8b8b8;
    box-shadow: 0 3px 18px rgba(0, 0, 0, .4);
}

.dlg-head {
    height: 34px;
    flex: none;
    display: flex;
    align-items: center;
    justify-content: space-between;
    padding: 4px 6px 0 5px;
}

.dlg-head h2 {
    font-size: 14px;
}

.dlg-ctl {
    display: flex;
    gap: 16px;
}

.dlg-ctl button, .dlg-ctl svg {
    width: 12px;
    height: 12px;
    stroke: #777;
}

.dlg-tools {
    height: 30px;
    flex: none;
    display: flex;
    align-items: center;
    gap: 7px;
    padding: 1px 0 0 1px;
    background: #fff;
    border: 1px solid #c0c2c8;
}

.dlg-tools button {
    display: flex;
    align-items: center;
    gap: 4px;
}

.dlg-tools button .caret {
    margin-left: 3px;
}

.dlg-tools select {
    width: 100px;
    height: 26px;
    margin-right: -5px;
    padding: 0 3px;
    appearance: none;
    border: 1px solid #ccc;
    border-radius: 3px;
    background: linear-gradient(#666, #666) no-repeat 88px 12px / 5px 1px, linear-gradient(#666, #666) no-repeat 89px 13px / 3px 1px, linear-gradient(#666, #666) no-repeat 90px 14px / 1px 1px, #fff;
}

.tabs {
    position: relative;
    height: 25px;
    flex: none;
    display: flex;
    align-items: flex-end;
    gap: 4px;
    clip-path: inset(0 0 -1px 0);
}

/* blurred shade of the window behind the tab strip */
.tabs::before {
    content: "";
    position: absolute;
    left: 372px;
    right: 276px;
    top: 10px;
    height: 26px;
    background: #e0e0e0;
    filter: blur(5px);
}

.tab {
    width: 36px;
    height: 21px;
    color: #555;
    background: #dcdcdc;
}

.tab.active {
    width: 37px;
    height: 25px;
    margin-bottom: -1px;
    color: #1677e6;
    background: #fff;
    border: 1px solid #c0c2c8;
    border-bottom: none;
    border-radius: 3px 3px 0 0;
    z-index: 1;
}

.dlg-body {
    position: relative;
    flex: 1;
    min-height: 0;
    display: flex;
    background: #fff;
    border: 1px solid #c0c2c8;
}

.tabs {
    z-index: 1;
}

.left {
    width: 346px;
    flex: none;
    display: flex;
    flex-direction: column;
    padding: 9px;
}

.tree-tools {
    display: flex;
    align-items: center;
    gap: 10px;
    height: 28px;
    flex: none;
    padding: 1px 0 0 5px;
    border: 1px solid #c6c6c6;
    border-bottom: none;
}

.tree-tools button {
    display: flex;
    align-items: center;
    gap: 5px;
}

.tree-tools .caret {
    margin-left: 3px;
}

.tree-tools .expand {
    width: 11px;
    height: 20px;
    margin-left: auto;
    margin-right: 1px;
    justify-content: center;
    background: #f0f0f0;
    border-radius: 3px;
}

.expand svg {
    width: 7px;
    height: 6px;
    fill: #505a6e;
    stroke: none;
}

.tree li {
    display: flex;
    align-items: center;
    height: 24px;
    white-space: nowrap;
}

.tree .tri {
    width: 6px;
    height: 7px;
    margin-right: 4px;
}

.tree .fold {
    width: 15px;
    height: 13px;
    margin-right: 7px;
}

.parts {
    flex: 1;
    min-height: 0;
    padding: 0 0 0 12px;
    border: 1px solid #c6c6c6;
    border-top-width: 2px;
}

.parts .l2 {
    padding-left: 20px;
}

.parts .l3 {
    padding-left: 48px;
}

.parts .sel {
    display: flex;
    align-items: center;
    gap: 6px;
    height: 21px;
    padding: 0 5px 0 3px;
    border-radius: 2px;
    background: #c9dff9;
}

.props {
    height: 288px;
    flex: none;
    margin-top: 6px;
    border: 2px solid #c3c4c8;
}

.props table {
    width: 100%;
    border-right: 1px solid #d6d6d6;
}

.props .n { width: 7px; }
.props .k { width: 101px; }

.props th {
    height: 21px;
    background: #efefef;
    border: 1px solid #c6c6c6;
    border-top: none;
    border-left: none;
    line-height: 16px;
}

.props thead th {
    font-size: 13px;
}

.props td {
    height: 21px;
    padding-left: 2px;
    border: 1px solid #d6d6d6;
    white-space: nowrap;
}

/* Right side */
.right {
    flex: 1;
    min-width: 0;
    display: flex;
    flex-direction: column;
    padding-left: 5px;
    background: linear-gradient(90deg, #f0f0f0 5px, #fff 5px) no-repeat 0 0 / 100% 10px, #f0f0f0;
}

.upper {
    flex: 1;
    min-height: 0;
    display: flex;
    gap: 6px;
    padding-top: 1px;
    margin-bottom: 5px;
}

fieldset {
    min-width: 0;
    border: 1px solid #c9c9cb;
    border-radius: 3px;
    padding: 0 5px 6px;
    background: #fff;
}

legend {
    margin-left: 4px;
    line-height: 16px;
    background: #fff;
}

.atlas {
    position: relative;
    width: 299px;
    flex: none;
    display: flex;
}

.atlas-list {
    flex: 1;
    padding: 2px 0 0 12px;
    border: 1px solid #c9c9cb;
}

.atlas-list .leaf {
    padding-left: 28px;
}

.leaf span {
    display: flex;
    align-items: center;
    gap: 7px;
    height: 21px;
    padding: 0 16px 0 6px;
}

.leaf .sel {
    background: #c9dff9;
}

.doc {
    width: 13px;
    height: 13px;
}

.atlas .scroll {
    right: 10px;
    top: 110px;
    bottom: 19px;
}

.figure {
    flex: 1;
    display: flex;
    flex-direction: column;
    padding-bottom: 5px;
}

.figure-head {
    display: flex;
    justify-content: flex-end;
    align-items: center;
    gap: 6px;
    height: 24px;
    margin-bottom: 6px;
    flex: none;
}

.primary {
    width: 80px;
    height: 26px;
    color: #fff;
    background: #2c7fe2;
    border-radius: 3px;
}

.cad {
    width: 100%;
    flex: 1;
    min-height: 0;
    background: #000;
    font-family: "Liberation Serif", "Noto Sans CJK SC", serif;
    overflow: hidden;
    stroke: none;
}

.cad .w { stroke: #fff; }
.cad .y { stroke: #ff0; }
.cad .bar { stroke-width: 2; }
.tw { fill: #fff; }
.tg { fill: #0f0; }
.tc { fill: #0ff; }

.tg {
    font-family: "Liberation Sans", Arial, sans-serif;
    font-size: 11px;
}

.en {
    font-family: "Liberation Mono", monospace;
    font-size: 10px;
    white-space: pre;
}

.cad .big {
    font-family: "Liberation Serif", serif;
    font-size: 18px;
}

.lower {
    position: relative;
    height: 295px;
    flex: none;
    background: #fff;
    border: 1px solid #c3c4c8;
    border-right-width: 2px;
    border-bottom-width: 2px;
}

.bar-tools {
    display: flex;
    align-items: center;
    gap: 5px;
    height: 29px;
    padding: 1px 0 0 6px;
    border-bottom: 2px solid #c3c4c8;
}

.bar-tools button {
    display: flex;
    align-items: center;
    gap: 4px;
    height: 22px;
    padding: 0 5px;
    border-radius: 3px;
}

.bar-tools .sq {
    padding: 0 5px 0 0;
}

.bar-tools .sq:first-child {
    padding-right: 10px;
}

.bar-tools .caret {
    margin-left: 4px;
}

.bar-tools .on {
    background: #c2d9f2;
}

.ae {
    display: flex;
    align-items: center;
    justify-content: space-between;
    width: 16px;
    color: #1a75e8;
    font-size: 11px;
    font-weight: bold;
}

.ae svg {
    width: 4px;
    height: 14px;
}

.rebar {
    width: 1252px;
}

.c7 { width: 7px; }
.c33 { width: 33px; }
.c36 { width: 36px; }
.c38 { width: 38px; }
.c39 { width: 39px; }
.c49 { width: 49px; }
.c56 { width: 56px; }
.c61 { width: 61px; }
.c71 { width: 71px; }
.c72 { width: 72px; }
.c74 { width: 74px; }
.c156 { width: 156px; }
.c166 { width: 166px; }
.c201 { width: 201px; }

.rebar th {
    height: 21px;
    background: #efefef;
    border: 1px solid #c6c6c6;
    border-top: none;
    border-left: none;
    white-space: nowrap;
}

.rebar th.on {
    color: #fff;
    font-weight: bold;
    background: #7db8f9;
}

.rebar td {
    height: 21px;
    border: 1px solid #d3d3d3;
}

.rebar .cursor {
    box-shadow: inset -1px -1px #808080;
    border-right-color: #808080;
    border-bottom-color: #808080;
}

.resize {
    position: absolute;
    right: -5px;
    bottom: -5px;
    width: 8px;
    height: 8px;
    background: radial-gradient(#777 1px, transparent 1px) 0 0 / 3px 3px;
}
```
